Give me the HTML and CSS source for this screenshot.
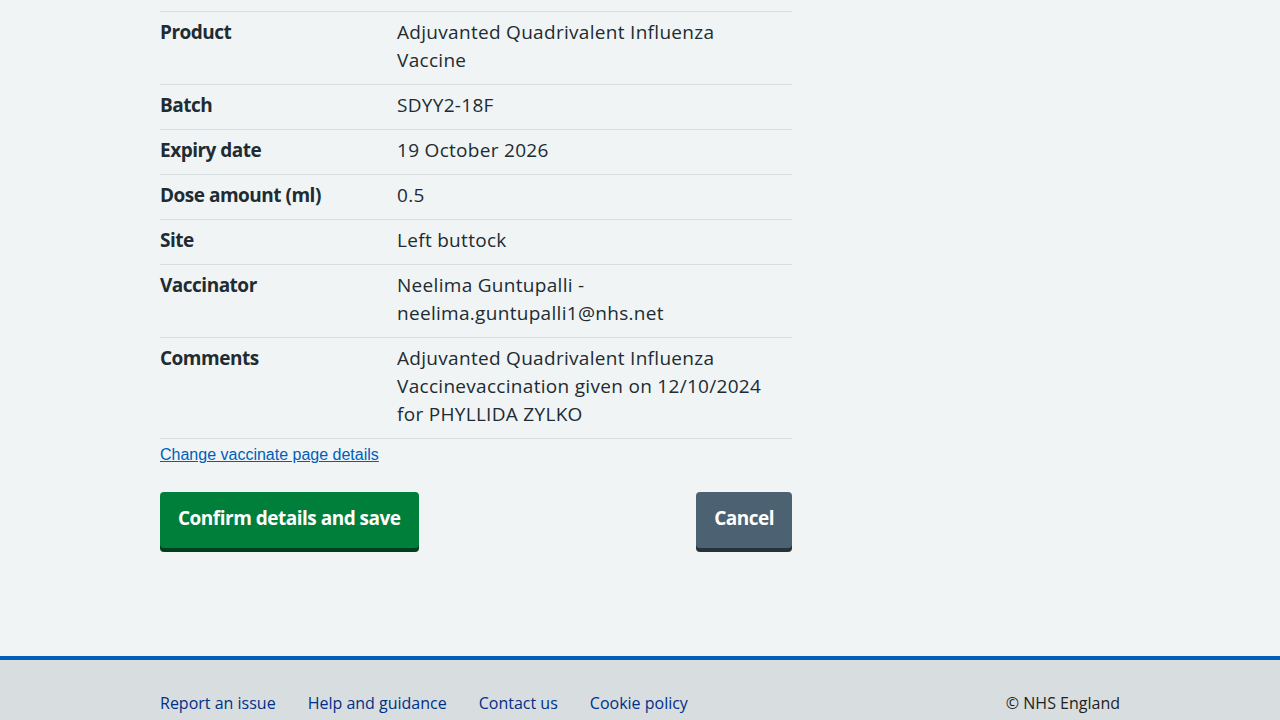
FILE: index.html
```html
<!DOCTYPE html>
<html lang="en">
<head>
<meta charset="utf-8">
<title>Check and confirm</title>
<link rel="stylesheet" href="styles.css">
</head>
<body>
<main class="main">
  <div class="container">
    <dl class="summary">
      <div class="summary-row">
        <dt class="summary-key">Product</dt>
        <dd class="summary-value">Adjuvanted Quadrivalent Influenza Vaccine</dd>
      </div>
      <div class="summary-row">
        <dt class="summary-key">Batch</dt>
        <dd class="summary-value">SDYY2-18F</dd>
      </div>
      <div class="summary-row">
        <dt class="summary-key">Expiry date</dt>
        <dd class="summary-value">19 October 2026</dd>
      </div>
      <div class="summary-row">
        <dt class="summary-key">Dose amount (ml)</dt>
        <dd class="summary-value">0.5</dd>
      </div>
      <div class="summary-row">
        <dt class="summary-key">Site</dt>
        <dd class="summary-value">Left buttock</dd>
      </div>
      <div class="summary-row">
        <dt class="summary-key">Vaccinator</dt>
        <dd class="summary-value">Neelima Guntupalli - neelima.guntupalli1@nhs.net</dd>
      </div>
      <div class="summary-row">
        <dt class="summary-key">Comments</dt>
        <dd class="summary-value">Adjuvanted Quadrivalent Influenza Vaccinevaccination given on 12/10/2024 for PHYLLIDA ZYLKO</dd>
      </div>
    </dl>
    <p class="change"><a class="change-link" href="#">Change vaccinate page details</a></p>
    <div class="actions">
      <button class="button button-primary" type="button">Confirm details and save</button>
      <button class="button button-secondary" type="button">Cancel</button>
    </div>
  </div>
</main>
<footer class="footer">
  <div class="footer-inner">
    <ul class="footer-links">
      <li><a href="#">Report an issue</a></li>
      <li><a href="#">Help and guidance</a></li>
      <li><a href="#">Contact us</a></li>
      <li><a href="#">Cookie policy</a></li>
    </ul>
    <p class="footer-copy">© NHS England</p>
  </div>
</footer>
</body>
</html>
```

FILE: styles.css
```css
html, body {
  margin: 0;
  padding: 0;
}
body {
  background: #f0f4f5;
  color: #212b32;
  font-family: "Open Sans", "Noto Sans", sans-serif;
  font-size: 19px;
  line-height: 28px;
}
.main {
  padding-top: 11px;
  padding-bottom: 108px;
}
.container {
  width: 632px;
  margin-left: 160px;
}
.summary {
  margin: 0;
  border-top: 1px solid #d8dde0;
}
.summary-row {
  display: flex;
  border-bottom: 1px solid #d8dde0;
}
.summary-key {
  width: 237px;
  flex: none;
  font-weight: 700;
  letter-spacing: -0.5px;
  padding: 6px 0 10px;
  margin: 0;
}
.summary-value {
  flex: 1;
  margin: 0;
  letter-spacing: 0.3px;
  padding: 6px 24px 10px 0;
}
.change {
  margin: 4px 0 0;
  font-family: "Liberation Sans", Arial, sans-serif;
  font-size: 16px;
  line-height: 24px;
}
.change-link {
  color: #005eb8;
  text-decoration: underline;
}
.actions {
  display: flex;
  justify-content: space-between;
  align-items: flex-start;
  margin-top: 25px;
}
.button {
  font-family: inherit;
  font-size: 19px;
  line-height: 28px;
  font-weight: 700;
  letter-spacing: -0.5px;
  color: #ffffff;
  border: 0;
  border-radius: 4px;
  padding: 12px 18px 16px;
  cursor: pointer;
}
.button-primary {
  background: #007f3b;
  box-shadow: 0 4px 0 #00401e;
}
.button-secondary {
  background: #4c6272;
  box-shadow: 0 4px 0 #263139;
}
.footer {
  background: #d8dde0;
  border-top: 4px solid #005eb8;
}
.footer-inner {
  width: 960px;
  margin-left: 160px;
  display: flex;
  justify-content: space-between;
  align-items: flex-start;
  padding-top: 31px;
  padding-bottom: 24px;
  font-size: 16px;
  line-height: 24px;
}
.footer-links {
  list-style: none;
  margin: 0;
  padding: 0;
  display: flex;
  gap: 32px;
}
.footer-links a {
  color: #003087;
  text-decoration: none;
}
.footer-copy {
  margin: 0;
  color: #231f20;
}
```
